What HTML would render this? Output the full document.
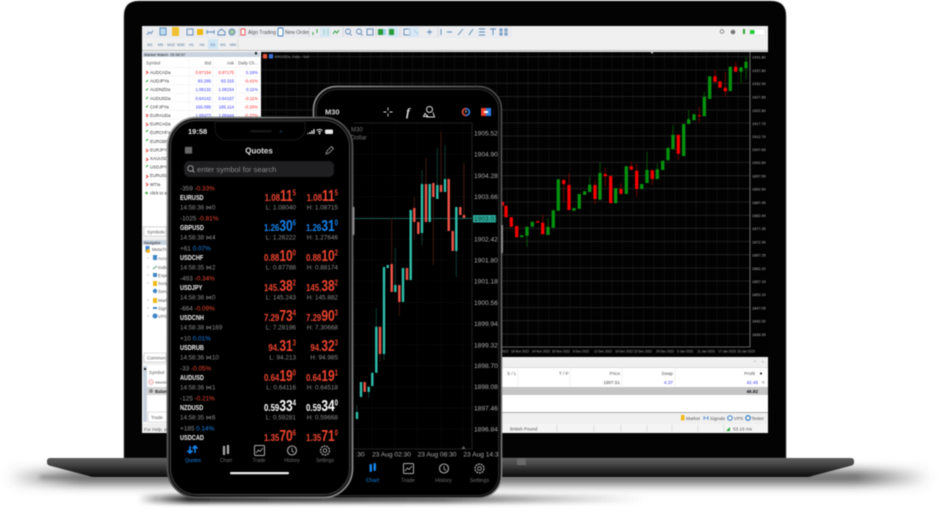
<!DOCTYPE html>
<html><head><meta charset="utf-8"><title>MetaTrader</title>
<style>
html,body{margin:0;padding:0;background:#fff;width:944px;height:512px;overflow:hidden}
svg{display:block;filter:blur(.4px)}
text{font-family:"Liberation Sans",sans-serif}
.mw{font-size:4.3px;fill:#333}
.b{fill:#3333ff}.r{fill:#ff2a2a}
.hd{font-size:4.3px;fill:#555}
.nav{font-size:4.6px;fill:#555}
.ax{font-size:3.8px;fill:#b5b5b5}
.tm{font-size:3.2px;fill:#aaa}
.p2{font-size:6.6px;fill:#aaa}
.chg{font-size:6.4px;fill:#8e8e8e}
.name{font-size:7px;font-weight:bold;fill:#eee}
.time{font-size:6.2px;fill:#8a8a8a}
.lh{font-size:6.4px;fill:#8a8a8a}
.sm{font-size:10.500px;font-weight:bold}
.bg{font-size:16px;font-weight:bold}
.up{font-size:8px;font-weight:bold}
.red{fill:#ee4530}.blu{fill:#1483ea}.wht{fill:#fff}
.tab{font-size:5.4px;fill:#6e6e6e}
.tb{font-size:3.9px;fill:#4c6d92}
</style></head><body>
<svg width="944" height="512" viewBox="0 0 944 512" xmlns="http://www.w3.org/2000/svg">
<defs>
<linearGradient id="base" x1="0" y1="0" x2="0" y2="1"><stop offset="0" stop-color="#5e5e5e"/><stop offset=".35" stop-color="#454545"/><stop offset=".6" stop-color="#2b2b2b"/><stop offset="1" stop-color="#0c0c0c"/></linearGradient>
<linearGradient id="rim" x1="0" y1="0" x2="1" y2="1"><stop offset="0" stop-color="#9a9a9a"/><stop offset=".5" stop-color="#4a4a4a"/><stop offset="1" stop-color="#8a8a8a"/></linearGradient>
<linearGradient id="sh1" x1="0" y1="0" x2="1" y2="0"><stop offset="0" stop-color="#555" stop-opacity="0"/><stop offset=".08" stop-color="#555" stop-opacity=".85"/><stop offset=".92" stop-color="#555" stop-opacity=".85"/><stop offset="1" stop-color="#555" stop-opacity="0"/></linearGradient>
<linearGradient id="sh2" x1="0" y1="0" x2="1" y2="0"><stop offset="0" stop-color="#111" stop-opacity="0"/><stop offset=".1" stop-color="#111" stop-opacity=".9"/><stop offset=".6" stop-color="#333" stop-opacity=".75"/><stop offset="1" stop-color="#888" stop-opacity="0"/></linearGradient>
<filter id="s1" filterUnits="userSpaceOnUse" x="0" y="440" width="944" height="72"><feGaussianBlur stdDeviation="5"/></filter>
<filter id="s2" filterUnits="userSpaceOnUse" x="0" y="470" width="944" height="42"><feGaussianBlur stdDeviation="2"/></filter>
</defs>

<!-- shadows -->
<rect x="6" y="470" width="925" height="15" fill="url(#sh1)" filter="url(#s1)"/>
<rect x="40" y="476" width="820" height="2.500" fill="#777" filter="url(#s2)"/>
<rect x="138" y="495" width="510" height="8" fill="url(#sh2)" filter="url(#s2)"/>

<!-- laptop base -->
<path d="M50 458H851Q854 458 854 461V463Q854 465 850 466L812 476Q810 477 805 477H96Q91 477 89 476L51 466Q47 465 47 463V461Q47 458 50 458Z" fill="url(#base)"/>
<rect x="517" y="458" width="9" height="7" fill="#6a6a6a"/>

<!-- laptop lid -->
<path d="M124 458V16Q124 1 139 1H771Q786 1 786 16V458Z" fill="#030303" stroke="#555" stroke-width=".6"/>

<!-- screen -->
<rect x="142" y="26" width="626" height="407" fill="#f0f0f0"/>
<rect x="142" y="26" width="370" height="12" fill="#eaecf0"/>
<rect x="142" y="38" width="626" height="12" fill="#f0f0f0"/>
<rect x="142" y="50" width="626" height="1.2" fill="#bbb"/>

<!-- toolbar row 1 -->
<g fill="none" stroke="#5b87b5" stroke-width=".9">
<path d="M147 35l2-3 2 1.500 2-3"/><rect x="160" y="28" width="6" height="7" fill="#bcdcf0"/>
<rect x="187" y="29" width="6" height="6"/><path d="M207 32h7M207 30v4M214 30v4"/>
<path d="M218 32l3.500-3 3.500 3v3h-7z"/><circle cx="232" cy="32" r="3" fill="#a5c7a5"/>
<path d="M313 35v-3M317 33v-4" stroke="#2a9a3a"/><path d="M324 29v6M328 29v6" stroke="#2a9a3a"/><path d="M333 34l2-3 2 2 2-3" stroke="#2a9a3a"/>
<circle cx="348" cy="31.500" r="2.500"/><path d="M350 34l1.500 1.500"/><circle cx="359" cy="31.500" r="2.500"/><path d="M361 34l1.500 1.500"/><rect x="367" y="29" width="6" height="6"/>
<rect x="404" y="29" width="6" height="6"/><path d="M414 30l4 4M427 32h5M429.500 29.500v5M441 29v6M447 32h5M458 35l5-6M469 35l4-6M479 29h6M479 32h6M479 35h6"/>
<path d="M490 29h6M493 29v6"/><path d="M500 29h2v2h-2zM505 29h2v2h-2zM500 33h2v2h-2zM505 33h2v2h-2z"/>
</g>
<rect x="172" y="27" width="7" height="9" fill="#f0c030"/><rect x="197" y="29" width="6" height="6" fill="#f0b810"/>
<rect x="320" y="27" width="10" height="10" fill="#cfe6f5" opacity=".7"/>
<rect x="378" y="29" width="5" height="6" fill="#2a9a3a"/><rect x="383" y="29" width="3" height="6" fill="#9ad0f0"/>
<rect x="388" y="27" width="10" height="10" fill="#cfe6f5"/><rect x="389" y="29" width="5" height="6" fill="#2a9a3a"/>
<rect x="409" y="27" width="10" height="10" fill="#cfe6f5" opacity=".7"/>
<rect x="241" y="29" width="4" height="6" fill="#fff" stroke="#e03030" stroke-width=".8"/>
<text x="248" y="34" style="font-size:5px" fill="#555">Algo Trading</text>
<rect x="278" y="28" width="5" height="8" rx="1" fill="#fff" stroke="#3a7ab8" stroke-width=".9"/>
<text x="285" y="34" style="font-size:5px" fill="#555">New Order</text>
<path d="M239 27v10M309 27v10M343 27v10M376 27v10M400 27v10M438 27v10" stroke="#c9c9c9" stroke-width=".6"/>
<circle cx="722" cy="31.500" r="1.800" fill="none" stroke="#777" stroke-width=".8"/>
<circle cx="733" cy="32" r="2.300" fill="#777"/>
<path d="M744 29v5" stroke="#2ca02c" stroke-width="2"/>
<rect x="749" y="29" width="16" height="6" fill="#fff" stroke="#ccc" stroke-width=".4"/><rect x="750" y="30" width="4.500" height="4" fill="#22cc33"/>

<!-- toolbar row 2 -->
<rect x="208" y="39" width="10" height="10" fill="#cfe6f5"/>
<g class="tb" text-anchor="middle">
<text class="tb" x="150" y="46">M1</text><text class="tb" x="160.500" y="46">M5</text><text class="tb" x="171" y="46">M15</text><text class="tb" x="181" y="46">M30</text><text class="tb" x="191.500" y="46">H1</text><text class="tb" x="202" y="46">H4</text><text class="tb" x="213" y="46">D1</text><text class="tb" x="223" y="46">W1</text><text class="tb" x="233" y="46">MN</text>
</g>
<path d="M238 39v10" stroke="#ccc" stroke-width=".6"/>

<!-- market watch -->
<rect x="142" y="51" width="119" height="179" fill="#fff"/>
<rect x="143" y="52" width="117" height="5" fill="#c9d3e0"/>
<text x="144" y="56" style="font-size:3.9px" fill="#222">Market Watch: 15:36:57</text>
<rect x="255" y="52" width="2" height="2.500" fill="#222"/>
<g stroke="#eee" stroke-width=".5"><path d="M143 67.500H260M143 76H260M143 84.700H260M143 93.300H260M143 102H260M143 110.500H260M143 119.200H260M143 128H260M143 136.500H260M143 145H260M143 154H260M143 162.500H260M143 171H260M143 180H260M143 188.500H260"/><path d="M189 58V200M213 58V200M236 58V200"/></g>
<text class="hd" x="146" y="64.500">Symbol</text>
<text class="hd" x="211" y="64.500" text-anchor="end">Bid</text>
<text class="hd" x="234" y="64.500" text-anchor="end">Ask</text>
<text class="hd" x="258" y="64.500" text-anchor="end">Daily Ch...</text>
<g class="mw">
<text class="mw" x="150" y="74">AUDCADa</text><text class="r mw" x="211" y="74" text-anchor="end">0.87154</text><text class="r mw" x="234" y="74" text-anchor="end">0.87175</text><text class="b mw" x="258" y="74" text-anchor="end">0.16%</text>
<text class="mw" x="150" y="82.600">AUDJPYa</text><text class="b mw" x="211" y="82.600" text-anchor="end">93.295</text><text class="b mw" x="234" y="82.600" text-anchor="end">93.315</text><text class="r mw" x="258" y="82.600" text-anchor="end">-0.41%</text>
<text class="mw" x="150" y="91.200">AUDNZDa</text><text class="b mw" x="211" y="91.200" text-anchor="end">1.08132</text><text class="b mw" x="234" y="91.200" text-anchor="end">1.08154</text><text class="b mw" x="258" y="91.200" text-anchor="end">0.11%</text>
<text class="mw" x="150" y="99.800">AUDUSDa</text><text class="b mw" x="211" y="99.800" text-anchor="end">0.64142</text><text class="b mw" x="234" y="99.800" text-anchor="end">0.64157</text><text class="r mw" x="258" y="99.800" text-anchor="end">-0.11%</text>
<text class="mw" x="150" y="108.400">CHFJPYa</text><text class="b mw" x="211" y="108.400" text-anchor="end">165.095</text><text class="b mw" x="234" y="108.400" text-anchor="end">165.114</text><text class="r mw" x="258" y="108.400" text-anchor="end">-0.25%</text>
<text class="mw" x="150" y="117">EURAUDa</text><text class="b mw" x="211" y="117" text-anchor="end">1.68473</text><text class="b mw" x="234" y="117" text-anchor="end">1.68444</text><text class="r mw" x="258" y="117" text-anchor="end">-0.37%</text>
<text class="mw" x="150" y="125.600">EURCADa</text>
<text class="mw" x="150" y="134.200">EURCHFa</text>
<text class="mw" x="150" y="142.800">EURGBPa</text>
<text class="mw" x="150" y="151.400">EURJPYa</text>
<text class="mw" x="150" y="160">XAUUSDa</text>
<text class="mw" x="150" y="168.600">USDJPYa</text>
<text class="mw" x="150" y="177.200">EURUSDa</text>
<text class="mw" x="150" y="185.800">WTIa</text>
<text class="mw" x="150" y="194.400" fill="#666">click to add</text>
</g>
<path d="M146 71l2 1.500-2 1.500M146 114l2 1.500-2 1.500M146 123l2 1.500-2 1.500M146 149l2 1.500-2 1.500M146 158l2 1.500-2 1.500M146 175l2 1.500-2 1.500M146 183l2 1.500-2 1.500" fill="none" stroke="#e83030" stroke-width=".9"/>
<path d="M146 82l2-2M146 90.500l2-2M146 99l2-2M146 107.500l2-2M146 132l2-2M146 141l2-2M146 167l2-2" fill="none" stroke="#22a030" stroke-width="1"/>
<path d="M145 193h3M146.500 191.500v3" stroke="#3aa040" stroke-width=".9"/>

<!-- symbols tab + navigator -->
<rect x="142" y="226" width="30" height="12" fill="#f0f0f0"/>
<rect x="144" y="227" width="22" height="9" fill="#fff" stroke="#aaa" stroke-width=".4"/>
<text class="nav" x="147" y="233.500">Symbols</text>
<rect x="143" y="240" width="30" height="5" fill="#c9d3e0"/>
<text x="144" y="244" style="font-size:3.9px" fill="#222">Navigator</text>
<rect x="142" y="245" width="30" height="110" fill="#fff"/>
<g class="nav">
<text class="nav" x="152" y="251">MetaTrader</text>
<text class="nav" x="158" y="260">Accounts</text>
<text class="nav" x="158" y="269">Indicators</text>
<text class="nav" x="158" y="277">Expert Advisors</text>
<text class="nav" x="158" y="285">Scripts</text>
<text class="nav" x="158" y="293">Services</text>
<text class="nav" x="158" y="302">Market</text>
<text class="nav" x="158" y="310">Signals</text>
<text class="nav" x="158" y="318">VPS</text>
</g>
<rect x="145.500" y="246" width="4" height="6" fill="#3f8ad0"/><circle cx="148" cy="251" r="2" fill="#f0b020"/>
<g fill="#3f86c8"><rect x="153" y="255" width="4" height="5"/><rect x="153" y="273" width="4" height="4"/><circle cx="155" cy="291" r="2.200"/><rect x="153" y="307" width="4" height="2"/><circle cx="155" cy="316" r="2.500"/></g>
<path d="M153 269l4-3" stroke="#4aa070" stroke-width="1"/>
<rect x="153" y="281" width="4" height="5" fill="#f0b818"/><rect x="153" y="298" width="4" height="5" fill="#f0b818"/>
<path d="M147 258h2M147 267h2M147 275h2M147 283h2M147 300h2M147 308h2M147 316h2" stroke="#999" stroke-width=".6"/>
<rect x="142" y="355" width="30" height="10" fill="#f0f0f0"/>
<rect x="144" y="353" width="22" height="9" fill="#fff" stroke="#aaa" stroke-width=".4"/>
<text class="nav" x="147" y="359.500">Common</text>

<!-- toolbox left -->
<rect x="142" y="365" width="30" height="58" fill="#fff"/>
<rect x="143" y="366" width="4" height="56" fill="#c9d3e0"/>
<rect x="144" y="368" width="2" height="2" fill="#222"/>
<text class="nav" x="149" y="374">Symbol</text>
<circle cx="151" cy="382" r="2.500" fill="#fbe0e0" stroke="#e58a8a" stroke-width=".5"/>
<text x="155" y="383.500" style="font-size:3.8px" fill="#444">xauusd</text>
<rect x="147" y="387" width="25" height="8" fill="#d4d4d4"/>
<circle cx="151" cy="391" r="2" fill="#888"/>
<text x="155" y="393" style="font-size:4.400px;font-weight:bold" fill="#222">Balance</text>
<rect x="148" y="412" width="20" height="10" fill="#fff" stroke="#aaa" stroke-width=".4"/>
<text class="nav" x="151" y="419">Trade</text>
<rect x="142" y="424" width="30" height="9" fill="#f0f0f0"/>
<text class="nav" x="144" y="431">For Help, press F1</text>

<!-- laptop chart -->
<rect x="261" y="52" width="507" height="305" fill="#020202"/>
<path d="M261 56.700H750M261 70H750M261 83.300H750M261 96.600H750M261 110H750M261 123H750M261 136H750M261 149H750M261 162.300H750M261 175.700H750M261 188.700H750M261 202H750M261 215.300H750M261 228.300H750M261 241.500H750M261 254.700H750M261 268H750M261 281H750M261 294H750M261 307.500H750M261 320.700H750M261 334H750" stroke="#262626" stroke-width=".8"/>
<path d="M265.500 52V347M276 52V347M286.500 52V347M297 52V347M307.500 52V347M318 52V347M328.500 52V347M339 52V347M349.500 52V347M360 52V347M370.500 52V347M381 52V347M391.500 52V347M402 52V347M412.500 52V347M423 52V347M433.500 52V347M444 52V347M454.500 52V347M465 52V347M475.500 52V347M486 52V347M496.500 52V347M507 52V347M517.500 52V347M528 52V347M538.500 52V347M549 52V347M559.500 52V347M570 52V347M580.500 52V347M591 52V347M601.500 52V347M612 52V347M622.500 52V347M633 52V347M643.500 52V347M654 52V347M664.500 52V347M675 52V347M685.500 52V347M696 52V347M706.500 52V347M717 52V347M727.500 52V347M738 52V347" stroke="#2a2a2a" stroke-width=".7" stroke-dasharray="1 1.500"/>
<path d="M750 52V347H261" fill="none" stroke="#b5b5b5" stroke-width=".6"/>
<rect x="263" y="54" width="4" height="4.500" fill="#e8553a"/><rect x="269" y="54" width="4" height="4.500" fill="#3a6fd8"/>
<text x="275" y="58" style="font-size:3.600px" fill="#888">MKUSDa, Daily - Sell</text>
<rect x="651" y="52" width="2" height="1.500" fill="#aaa"/>
<g fill="none" stroke-width=".8" stroke="#8a0000"><path d="M542.700 215V223M563.700 184V203M569 173.300V185M595 180V204M605.300 168.300V186.700M621 183.300V195M631.300 161.700V167M636.700 163.300V196.700M652.300 179V185M678.300 153V160M699.300 106.700V121.700M715 70V77M725.300 71.700V96.700M735.700 61.700V67"/></g>
<g fill="none" stroke-width=".8" stroke="#005f00"><path d="M527 235V246.700M548 218.300V228M589.700 176.700V185M600 161.700V175M647 151.700V171M657.300 163.300V170M673 125V135M688.700 110V120M704.300 91.700V97M741 71V83.300M746 56.700V79.300"/></g>
<path d="M502.300 201.700V205.700M506 205.700V217.300M511.300 217.300V226.700M516.700 226V237.300M537.700 221.300V222.700M542.700 222.700V234.300M563.700 180V184M569 185V210M595 185V199M605.300 174V176.300M610.700 176V203.300M621 189V193.700M631.300 166.300V169.700M636.700 170.700V189M652.300 170.300V179M678.300 134.700V153.700M699.300 115.300V116.300M715 76.300V82M720 81.300V87.700M725.300 87.700V91.300M735.700 66.700V71.700" fill="none" stroke="#f60000" stroke-width="3.300"/>
<path d="M521.700 235.300V237.300M527 226.700V235.700M532.300 221.700V226.700M548 226.700V235M553.300 210.300V227.700M558.300 179.300V210.700M574 208V210.700M579.300 194V208.700M584.700 191.300V194.700M589.700 184.700V192M600 173V199.700M615.700 188.300V203.300M626.300 166.300V194M641.700 184V189M647 170V183M657.300 169.300V179M662.700 160.700V170M668 147.700V160.300M673 134.700V149.300M683.700 124V156M688.700 119.300V124M694 114.300V120.300M704.300 96.700V116.300M709.700 76.300V99M730.300 66.700V91M741 67.300V71.700M746 61.700V68.300" fill="none" stroke="#05930f" stroke-width="3.300"/>
<g>
<text class="ax" x="752" y="58.500">1941.80</text><text class="ax" x="752" y="71.800">1937.80</text><text class="ax" x="752" y="85">1932.90</text><text class="ax" x="752" y="98.400">1927.85</text><text class="ax" x="752" y="111.800">1922.80</text><text class="ax" x="752" y="124.800">1917.75</text><text class="ax" x="752" y="137.800">1912.70</text><text class="ax" x="752" y="150.800">1907.65</text><text class="ax" x="752" y="164">1902.60</text><text class="ax" x="752" y="177.400">1897.55</text><text class="ax" x="752" y="190.400">1892.50</text><text class="ax" x="752" y="203.800">1887.45</text><text class="ax" x="752" y="217">1882.40</text><text class="ax" x="752" y="230">1877.35</text><text class="ax" x="752" y="243.300">1872.30</text><text class="ax" x="752" y="256.400">1867.25</text><text class="ax" x="752" y="269.800">1862.20</text><text class="ax" x="752" y="282.800">1857.15</text><text class="ax" x="752" y="295.800">1852.10</text><text class="ax" x="752" y="309.300">1847.05</text><text class="ax" x="752" y="322.500">1842.00</text><text class="ax" x="752" y="335.800">1836.95</text>
</g>
<g class="tm" text-anchor="middle">
<text class="tm" x="505" y="352.500">2022</text><text class="tm" x="520" y="352.500">18 Nov 2022</text><text class="tm" x="541" y="352.500">24 Nov 2022</text><text class="tm" x="561" y="352.500">30 Nov 2022</text><text class="tm" x="581" y="352.500">6 Dec 2022</text><text class="tm" x="603" y="352.500">12 Dec 2022</text><text class="tm" x="624" y="352.500">16 Dec 2022</text><text class="tm" x="643" y="352.500">22 Dec 2022</text><text class="tm" x="665" y="352.500">29 Dec 2022</text><text class="tm" x="685" y="352.500">5 Jan 2023</text><text class="tm" x="706" y="352.500">11 Jan 2023</text><text class="tm" x="727" y="352.500">17 Jan 2023</text><text class="tm" x="746" y="352.500">23 Jan 2023</text>
</g>

<!-- trade panel -->
<rect x="172" y="357" width="596" height="56" fill="#fff"/>
<rect x="172" y="357" width="596" height="10" fill="#efefef"/>
<path d="M754 362l1.500-1.500M762 361l1.500 1.500" stroke="#aaa" stroke-width=".7"/>
<rect x="172" y="367" width="596" height="1" fill="#ddd"/>
<text class="nav" x="507" y="375">S / L</text>
<text class="nav" x="559" y="375">T / P</text>
<text class="nav" x="620" y="375" text-anchor="end">Price</text>
<text class="nav" x="673" y="375" text-anchor="end">Swap</text>
<text class="nav" x="755" y="375" text-anchor="end">Profit</text>
<rect x="760" y="372.500" width="2" height="2" fill="#333"/>
<text x="620" y="384" text-anchor="end" style="font-size:4.600px" fill="#444">1907.51</text>
<text x="673" y="384" text-anchor="end" style="font-size:4.600px" fill="#3333ff">4.37</text>
<text x="758" y="384" text-anchor="end" style="font-size:4.600px" fill="#3333ff">42.45</text>
<path d="M762 381l2.500 2.500M764.500 381l-2.500 2.500" stroke="#aaa" stroke-width=".6"/>
<path d="M518 368V386M570 368V386M622 368V386M675 368V386" stroke="#e4e4e4" stroke-width=".5"/>
<rect x="172" y="387" width="596" height="8" fill="#c5c5c5"/>
<text x="758" y="393" text-anchor="end" style="font-size:4.600px;font-weight:bold" fill="#111">46.82</text>
<rect x="172" y="412" width="596" height="1" fill="#aaa"/>
<rect x="172" y="413" width="596" height="10" fill="#f0f0f0"/>
<rect x="681" y="415" width="3.500" height="5.500" fill="#f0b818"/>
<text class="nav" x="686" y="419.800">Market</text>
<path d="M704 416v4M708 416v4M704 418h4" stroke="#4a86c8" stroke-width=".8"/>
<text class="nav" x="710" y="419.800">Signals</text>
<circle cx="730" cy="418" r="2.300" fill="none" stroke="#3f86c8" stroke-width="1"/>
<text class="nav" x="734" y="419.800">VPS</text>
<circle cx="748" cy="418" r="2.300" fill="none" stroke="#3f86c8" stroke-width="1.300"/>
<text class="nav" x="751.500" y="419.800">Tester</text>
<rect x="172" y="424" width="596" height="9" fill="#f4f4f4"/>
<text class="nav" x="510" y="430.500" fill="#333">British Pound</text>
<path d="M557 425V432M594 425V432M621 425V432M647 425V432M672 425V432M698 425V432M724 425V432" stroke="#ccc" stroke-width=".5"/>
<path d="M726 431l4-4v4z" fill="#22aa33"/>
<text class="nav" x="733" y="430.500">53.15 ms</text>

<!-- phone 2 (back) -->
<rect x="313.500" y="86.500" width="188" height="411.500" rx="23" fill="#0c0c0c" stroke="url(#rim)" stroke-width="1.500"/>
<rect x="316.500" y="89.500" width="182" height="406" rx="20" fill="#000" stroke="#2a2a2a" stroke-width="1"/>
<rect x="501" y="225" width="2" height="28" fill="#8a8a8a"/>
<text x="325" y="114.500" style="font-size:7.500px;font-weight:bold" fill="#d8d8d8">M30</text>
<path d="M388 107.500v3M388 113.500v3M383.500 112h3M389.500 112h3" stroke="#ddd" stroke-width=".9"/>
<text x="408" y="116" text-anchor="middle" style="font-family:'Liberation Serif',serif;font-size:12px;font-style:italic;font-weight:bold" fill="#ddd">f</text>
<circle cx="429.500" cy="109.500" r="3" fill="none" stroke="#ddd" stroke-width="1"/>
<path d="M425 113.500l-1.500 3h4.500zM433 112.500l1.500 4.500h-8" fill="none" stroke="#ddd" stroke-width="1"/>
<circle cx="466" cy="112" r="3.500" fill="#111" stroke="#2a7fe0" stroke-width="1.600"/>
<path d="M466 108.500A3.500 3.500 0 0 0 466 115.500" fill="none" stroke="#e8402a" stroke-width="1.600"/>
<path d="M466 110.500v2" stroke="#fff" stroke-width=".8"/>
<rect x="481" y="108" width="5" height="8" fill="#e8402a"/><rect x="486" y="108" width="5" height="8" fill="#2a7fe0"/><rect x="484" y="111" width="4" height="2" fill="#fff"/>

<!-- phone2 chart -->
<path d="M354 133H472M354 154.200H472M354 175.500H472M354 196.700H472M354 239H472M354 260H472M354 281.300H472M354 302.500H472M354 323.800H472M354 345H472M354 365.600H472M354 386.800H472M354 408H472M354 429H472" stroke="#1c1c1c" stroke-width=".7" stroke-dasharray="1 2"/>
<path d="M372 124V449M395 124V449M417 124V449M441 124V449M463 124V449" stroke="#1c1c1c" stroke-width=".7" stroke-dasharray="1 2"/>
<path d="M354 449H472V123H354" fill="none" stroke="#2a2a2a" stroke-width=".8"/>
<text x="351" y="131.500" style="font-size:6px" fill="#777">M30</text>
<text x="351" y="139.500" style="font-size:6px" fill="#777">Dollar</text>
<path d="M354 218.500H472" stroke="#1c5b52" stroke-width=".9"/>
<path d="M441 131.700V185M433.300 197V265M464 163V215M426 158V184M391.700 218V264M414.300 197V240M399.300 302V316M380 354V362" stroke="#451812" stroke-width=".9"/>
<path d="M437.300 148V185M445 145V179M422 170V245M456.300 251V277M395.300 248V285M376.300 308V327M357 405V412M368.700 392V398M384 354V360" stroke="#0f4039" stroke-width=".9"/>
<g fill="none" stroke="#f05348" stroke-width="2.400">
<path d="M364.700 382V392M380 326.700V354M391.700 264V292M399.300 285V302M407 268V280M414.300 208V222M418.300 222V234M426 184V222M433.300 183V197M441 185V192M448.700 179V231M452.700 231V251M460.300 207V215M464 215V218"/>
</g>
<g fill="none" stroke="#2fc0ab" stroke-width="2.400">
<path d="M357 412V419M361 382V397M368.700 386.700V392M372.300 372.700V386M376.300 326.700V372.700M384 267V354M387.700 265V268M395.300 285V292M403 268V302M410.700 210V280M422 184V233M429.700 184V222M437.300 185V199M445 179V192M456.300 207V251"/>
</g>
<g class="p2">
<text class="p2" x="474" y="135.300">1905.52</text><text class="p2" x="474" y="156.500">1904.90</text><text class="p2" x="474" y="177.800">1904.28</text><text class="p2" x="474" y="199">1903.66</text><text class="p2" x="474" y="241.300">1902.42</text><text class="p2" x="474" y="262.300">1901.80</text><text class="p2" x="474" y="283.600">1901.18</text><text class="p2" x="474" y="304.800">1900.56</text><text class="p2" x="474" y="326">1899.94</text><text class="p2" x="474" y="347.300">1899.32</text><text class="p2" x="474" y="367.900">1898.70</text><text class="p2" x="474" y="389.100">1898.08</text><text class="p2" x="474" y="410.300">1897.46</text><text class="p2" x="474" y="431.300">1896.84</text>
</g>
<rect x="473" y="215" width="23" height="7.500" fill="#2aa899"/>
<text x="474" y="221" style="font-size:6.600px" fill="#0e3a36">1903.01</text>
<path d="M461.500 449l2-3 2 3z" fill="#666"/>
<g class="p2" text-anchor="middle">
<text class="p2" x="360" y="456.500">:30</text><text class="p2" x="391.500" y="456.500">23 Aug 02:30</text><text class="p2" x="437" y="456.500">23 Aug 08:30</text><text class="p2" x="481" y="456.500">23 Aug 14:3</text>
</g>
<!-- phone2 nav -->
<rect x="369.500" y="464" width="2.500" height="8" rx="1" fill="#1483ea"/><rect x="373.500" y="463" width="2.500" height="8" rx="1" fill="#1483ea"/>
<rect x="403.500" y="463.500" width="10" height="10" rx="1" fill="none" stroke="#aaa" stroke-width="1"/>
<path d="M405 471l2.500-3 1.500 1.500 3-3.500" fill="none" stroke="#aaa" stroke-width=".9"/>
<circle cx="444" cy="468.500" r="4.500" fill="none" stroke="#aaa" stroke-width="1.100"/><path d="M444 466v3l2 1.500" fill="none" stroke="#aaa" stroke-width=".9"/>
<circle cx="479.500" cy="468.500" r="4.500" fill="none" stroke="#aaa" stroke-width="1.300" stroke-dasharray="2 .8"/><circle cx="479.500" cy="468.500" r="1.800" fill="none" stroke="#aaa" stroke-width=".9"/>
<text class="tab" x="372.500" y="482" text-anchor="middle" style="fill:#1483ea">Chart</text>
<text class="tab" x="408" y="482" text-anchor="middle">Trade</text>
<text class="tab" x="443.500" y="482" text-anchor="middle">History</text>
<text class="tab" x="479.500" y="482" text-anchor="middle">Settings</text>

<!-- phone 1 (front) -->
<rect x="167.500" y="117.500" width="185" height="380" rx="29" fill="#111" stroke="url(#rim)" stroke-width="1.800"/>
<rect x="170.500" y="120.500" width="179" height="374" rx="26" fill="#000" stroke="#3a3a3a" stroke-width="1.200"/>
<rect x="352.500" y="207" width="2" height="28" fill="#8a8a8a"/>
<path d="M215 122H305V127Q305 140 292 140H228Q215 140 215 127Z" fill="#000" stroke="#1c1c1c" stroke-width=".8"/>
<rect x="250" y="130" width="22" height="2.500" rx="1.200" fill="#161616"/><circle cx="281" cy="131.500" r="1.300" fill="#17263e"/>
<text x="188" y="134" style="font-size:7.500px;font-weight:bold" fill="#e8e8e8">19:58</text>
<path d="M308 134v-1M310 134v-2M312 134v-3.500M314 134v-5" stroke="#e8e8e8" stroke-width="1.300"/>
<path d="M316.500 130.500a4.500 4.500 0 0 1 6 0M318 132a2.500 2.500 0 0 1 3 0" fill="none" stroke="#e8e8e8" stroke-width="1"/><circle cx="319.500" cy="133.500" r=".9" fill="#e8e8e8"/>
<rect x="325" y="129.500" width="8" height="4.500" rx="1" fill="#e8e8e8"/>
<path d="M185 147h7v6.500h-7zM190 147v6.500" fill="#666" stroke="#666" stroke-width=".3"/>
<text x="259" y="153.500" text-anchor="middle" style="font-size:8px;font-weight:bold" fill="#e0e0e0">Quotes</text>
<path d="M326 154l1-3 4.500-4.500 2 2-4.500 4.500z" fill="none" stroke="#888" stroke-width="1"/>
<rect x="184" y="161" width="150" height="16" rx="5" fill="#1f1f21"/>
<circle cx="190.500" cy="168.500" r="2.800" fill="none" stroke="#999" stroke-width="1"/><path d="M192.500 170.500l2 2" stroke="#999" stroke-width="1"/>
<text x="197" y="171.800" style="font-size:7.600px" fill="#888">enter symbol for search</text>

<!-- rows -->
<g>
<text class="chg" x="180" y="190.500">-359 <tspan class="red">-0.33%</tspan></text>
<text class="name" x="180" y="200" transform="translate(36 0) scale(.8 1)">EURUSD</text>
<text class="time" x="180" y="209.500">14:58:36 ⋈0</text>
<text transform="translate(296 201) scale(.75 1)" text-anchor="end" class="red"><tspan class="sm">1.08</tspan><tspan class="bg">11</tspan><tspan class="up" dy="-5.500">5</tspan></text>
<text transform="translate(338 201) scale(.75 1)" text-anchor="end" class="red"><tspan class="sm">1.08</tspan><tspan class="bg">11</tspan><tspan class="up" dy="-5.500">5</tspan></text>
<text class="lh" x="296" y="209.500" text-anchor="end">L: 1.08040</text><text class="lh" x="338" y="209.500" text-anchor="end">H: 1.08715</text>
</g>
<g transform="translate(0 30)">
<text class="chg" x="180" y="190.500">-1025 <tspan class="red">-0.81%</tspan></text>
<text class="name" x="180" y="200" transform="translate(36 0) scale(.8 1)">GBPUSD</text>
<text class="time" x="180" y="209.500">14:58:38 ⋈4</text>
<text transform="translate(296 201) scale(.75 1)" text-anchor="end" class="blu"><tspan class="sm">1.26</tspan><tspan class="bg">30</tspan><tspan class="up" dy="-5.500">6</tspan></text>
<text transform="translate(338 201) scale(.75 1)" text-anchor="end" class="blu"><tspan class="sm">1.26</tspan><tspan class="bg">31</tspan><tspan class="up" dy="-5.500">0</tspan></text>
<text class="lh" x="296" y="209.500" text-anchor="end">L: 1.26222</text><text class="lh" x="338" y="209.500" text-anchor="end">H: 1.27646</text>
</g>
<g transform="translate(0 60)">
<text class="chg" x="180" y="190.500">+61 <tspan class="blu">0.07%</tspan></text>
<text class="name" x="180" y="200" transform="translate(36 0) scale(.8 1)">USDCHF</text>
<text class="time" x="180" y="209.500">14:58:35 ⋈2</text>
<text transform="translate(296 201) scale(.75 1)" text-anchor="end" class="red"><tspan class="sm">0.88</tspan><tspan class="bg">10</tspan><tspan class="up" dy="-5.500">0</tspan></text>
<text transform="translate(338 201) scale(.75 1)" text-anchor="end" class="red"><tspan class="sm">0.88</tspan><tspan class="bg">10</tspan><tspan class="up" dy="-5.500">2</tspan></text>
<text class="lh" x="296" y="209.500" text-anchor="end">L: 0.87788</text><text class="lh" x="338" y="209.500" text-anchor="end">H: 0.88174</text>
</g>
<g transform="translate(0 90)">
<text class="chg" x="180" y="190.500">-493 <tspan class="red">-0.34%</tspan></text>
<text class="name" x="180" y="200" transform="translate(36 0) scale(.8 1)">USDJPY</text>
<text class="time" x="180" y="209.500">14:58:36 ⋈0</text>
<text transform="translate(296 201) scale(.75 1)" text-anchor="end" class="red"><tspan class="sm">145.</tspan><tspan class="bg">38</tspan><tspan class="up" dy="-5.500">2</tspan></text>
<text transform="translate(338 201) scale(.75 1)" text-anchor="end" class="red"><tspan class="sm">145.</tspan><tspan class="bg">38</tspan><tspan class="up" dy="-5.500">2</tspan></text>
<text class="lh" x="296" y="209.500" text-anchor="end">L: 145.243</text><text class="lh" x="338" y="209.500" text-anchor="end">H: 145.882</text>
</g>
<g transform="translate(0 120)">
<text class="chg" x="180" y="190.500">-664 <tspan class="red">-0.09%</tspan></text>
<text class="name" x="180" y="200" transform="translate(36 0) scale(.8 1)">USDCNH</text>
<text class="time" x="180" y="209.500">14:58:38 ⋈169</text>
<text transform="translate(296 201) scale(.75 1)" text-anchor="end" class="red"><tspan class="sm">7.29</tspan><tspan class="bg">73</tspan><tspan class="up" dy="-5.500">4</tspan></text>
<text transform="translate(338 201) scale(.75 1)" text-anchor="end" class="red"><tspan class="sm">7.29</tspan><tspan class="bg">90</tspan><tspan class="up" dy="-5.500">3</tspan></text>
<text class="lh" x="296" y="209.500" text-anchor="end">L: 7.28196</text><text class="lh" x="338" y="209.500" text-anchor="end">H: 7.30668</text>
</g>
<g transform="translate(0 150)">
<text class="chg" x="180" y="190.500">+10 <tspan class="blu">0.01%</tspan></text>
<text class="name" x="180" y="200" transform="translate(36 0) scale(.8 1)">USDRUB</text>
<text class="time" x="180" y="209.500">14:58:36 ⋈10</text>
<text transform="translate(296 201) scale(.75 1)" text-anchor="end" class="red"><tspan class="sm">94.</tspan><tspan class="bg">31</tspan><tspan class="up" dy="-5.500">3</tspan></text>
<text transform="translate(338 201) scale(.75 1)" text-anchor="end" class="red"><tspan class="sm">94.</tspan><tspan class="bg">32</tspan><tspan class="up" dy="-5.500">3</tspan></text>
<text class="lh" x="296" y="209.500" text-anchor="end">L: 94.213</text><text class="lh" x="338" y="209.500" text-anchor="end">H: 94.985</text>
</g>
<g transform="translate(0 180)">
<text class="chg" x="180" y="190.500">-33 <tspan class="red">-0.05%</tspan></text>
<text class="name" x="180" y="200" transform="translate(36 0) scale(.8 1)">AUDUSD</text>
<text class="time" x="180" y="209.500">14:58:36 ⋈1</text>
<text transform="translate(296 201) scale(.75 1)" text-anchor="end" class="red"><tspan class="sm">0.64</tspan><tspan class="bg">19</tspan><tspan class="up" dy="-5.500">0</tspan></text>
<text transform="translate(338 201) scale(.75 1)" text-anchor="end" class="red"><tspan class="sm">0.64</tspan><tspan class="bg">19</tspan><tspan class="up" dy="-5.500">1</tspan></text>
<text class="lh" x="296" y="209.500" text-anchor="end">L: 0.64116</text><text class="lh" x="338" y="209.500" text-anchor="end">H: 0.64518</text>
</g>
<g transform="translate(0 210)">
<text class="chg" x="180" y="190.500">-125 <tspan class="red">-0.21%</tspan></text>
<text class="name" x="180" y="200" transform="translate(36 0) scale(.8 1)">NZDUSD</text>
<text class="time" x="180" y="209.500">14:58:35 ⋈6</text>
<text transform="translate(296 201) scale(.75 1)" text-anchor="end" class="wht"><tspan class="sm">0.59</tspan><tspan class="bg">33</tspan><tspan class="up" dy="-5.500">4</tspan></text>
<text transform="translate(338 201) scale(.75 1)" text-anchor="end" class="wht"><tspan class="sm">0.59</tspan><tspan class="bg">34</tspan><tspan class="up" dy="-5.500">0</tspan></text>
<text class="lh" x="296" y="209.500" text-anchor="end">L: 0.59281</text><text class="lh" x="338" y="209.500" text-anchor="end">H: 0.59668</text>
</g>
<g transform="translate(0 240)">
<text class="chg" x="180" y="190.500">+185 <tspan class="blu">0.14%</tspan></text>
<text class="name" x="180" y="200" transform="translate(36 0) scale(.8 1)">USDCAD</text>
<text transform="translate(296 201) scale(.75 1)" text-anchor="end" class="red"><tspan class="sm">1.35</tspan><tspan class="bg">70</tspan><tspan class="up" dy="-5.500">6</tspan></text>
<text transform="translate(338 201) scale(.75 1)" text-anchor="end" class="red"><tspan class="sm">1.35</tspan><tspan class="bg">71</tspan><tspan class="up" dy="-5.500">0</tspan></text>
</g>

<!-- phone1 nav -->
<path d="M190 446v7M187.500 450.500l2.500 2.500 2.500-2.500" fill="none" stroke="#1483ea" stroke-width="1.600"/>
<path d="M195 453v-7M192.500 448.500l2.500-2.500 2.500 2.500" fill="none" stroke="#1483ea" stroke-width="1.600"/>
<path d="M224 446v9M228 445v9" stroke="#aaa" stroke-width="2.200"/>
<rect x="254.500" y="445.500" width="10" height="10" rx="1" fill="none" stroke="#aaa" stroke-width="1"/>
<path d="M256 453l2.500-3 1.500 1.500 3-3.500" fill="none" stroke="#aaa" stroke-width=".9"/>
<circle cx="292" cy="450.500" r="4.500" fill="none" stroke="#aaa" stroke-width="1.100"/><path d="M292 448v3l2 1.500" fill="none" stroke="#aaa" stroke-width=".9"/>
<circle cx="325" cy="450.500" r="4.500" fill="none" stroke="#aaa" stroke-width="1.300" stroke-dasharray="2 .8"/><circle cx="325" cy="450.500" r="1.800" fill="none" stroke="#aaa" stroke-width=".9"/>
<text class="tab" x="193" y="462" text-anchor="middle" style="fill:#1483ea;font-size:5px">Quotes</text>
<text class="tab" x="226" y="462" text-anchor="middle" style="font-size:5px">Chart</text>
<text class="tab" x="259" y="462" text-anchor="middle" style="font-size:5px">Trade</text>
<text class="tab" x="292" y="462" text-anchor="middle" style="font-size:5px">History</text>
<text class="tab" x="325" y="462" text-anchor="middle" style="font-size:5px">Settings</text>
<rect x="230" y="472" width="59" height="2.200" rx="1" fill="#f0f0f0"/>
</svg>
</body></html>
